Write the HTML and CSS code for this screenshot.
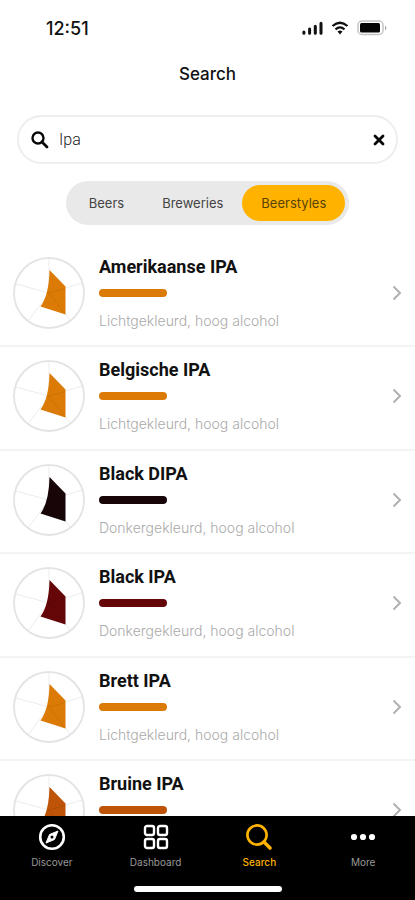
FILE: index.html
```html
<!DOCTYPE html>
<html lang="en">
<head>
<meta charset="utf-8">
<meta name="viewport" content="width=device-width, initial-scale=1">
<title>Search</title>
<link rel="stylesheet" href="styles.css">
</head>
<body>
<svg class="defs" aria-hidden="true">
  <symbol id="radar" viewBox="0 0 72 72">
    <path d="M36 36V1M36 36L69 26M36 36L58 64M36 36L15 64M36 36L3 27" fill="none" stroke="#ececec"/>
    <circle cx="36" cy="36" r="35" fill="none" stroke="#e4e4e4" stroke-width="1.8"/>
    <path d="M36.500 13L52.500 29.500V57.500L27.500 49.500Q36 38 36.500 13Z" fill="currentColor"/>
    <path d="M34 36.500L52 31.500M36 36L52 57" fill="none" stroke="#000" stroke-opacity=".07"/>
  </symbol>
  <symbol id="chevron" viewBox="0 0 10 16">
    <path d="M1.500 1.500L8 8L1.500 14.500" fill="none" stroke="#b0b0b0" stroke-width="2"/>
  </symbol>
</svg>

<div class="status">
  <span class="clock">12:51</span>
  <div class="signals">
    <svg width="21" height="14" viewBox="0 0 21 14" aria-hidden="true"><path d="M2 13V11.500M8 13V8.500M14 13V5.500M20 13V2.500" stroke="#111" stroke-width="3.200" stroke-linecap="round" fill="none" transform="scale(.95)"/></svg>
    <svg width="18" height="14" viewBox="0 0 18 14" aria-hidden="true"><path d="M1.500 5Q9-1.500 16.500 5M4.500 8.300Q9 4.500 13.500 8.300" stroke="#111" stroke-width="2.300" fill="none"/><path d="M6.500 10.500Q9 8.500 11.500 10.500L9 13.500Z" fill="#111"/></svg>
    <svg width="30" height="16" viewBox="0 0 30 16" aria-hidden="true"><rect x="1" y="1" width="25" height="13.500" rx="4" fill="#fff" stroke="#c4c4c4" stroke-width="1.500"/><rect x="3" y="3" width="20" height="9.500" rx="1.500" fill="#050505"/><path d="M28 5.500Q31 8 28 10.500Z" fill="#aaa"/></svg>
  </div>
</div>

<h1 class="title">Search</h1>

<form class="search" role="search">
  <label for="q" aria-label="Search"><svg width="18" height="18" viewBox="0 0 18 18"><circle cx="7" cy="7" r="5.500" fill="none" stroke="#080808" stroke-width="2.400"/><path d="M11 11L16 16" stroke="#080808" stroke-width="2.800" stroke-linecap="round"/></svg></label>
  <input id="q" type="text" value="Ipa">
  <button type="button" aria-label="Clear"><svg width="12" height="12" viewBox="0 0 12 12"><path d="M2 2L10 10M10 2L2 10" stroke="#080808" stroke-width="2.800" stroke-linecap="round"/></svg></button>
</form>

<div class="segments">
  <button type="button">Beers</button>
  <button type="button">Breweries</button>
  <button type="button" class="active">Beerstyles</button>
</div>

<main class="list">
  <a class="row amber" href="#"><svg class="radar"><use href="#radar"/></svg><div class="info"><h2>Amerikaanse IPA</h2><div class="bar"></div><p>Lichtgekleurd, hoog alcohol</p></div><svg class="chevron"><use href="#chevron"/></svg></a>
  <a class="row amber" href="#"><svg class="radar"><use href="#radar"/></svg><div class="info"><h2>Belgische IPA</h2><div class="bar"></div><p>Lichtgekleurd, hoog alcohol</p></div><svg class="chevron"><use href="#chevron"/></svg></a>
  <a class="row black" href="#"><svg class="radar"><use href="#radar"/></svg><div class="info"><h2>Black DIPA</h2><div class="bar"></div><p>Donkergekleurd, hoog alcohol</p></div><svg class="chevron"><use href="#chevron"/></svg></a>
  <a class="row red" href="#"><svg class="radar"><use href="#radar"/></svg><div class="info"><h2>Black IPA</h2><div class="bar"></div><p>Donkergekleurd, hoog alcohol</p></div><svg class="chevron"><use href="#chevron"/></svg></a>
  <a class="row amber" href="#"><svg class="radar"><use href="#radar"/></svg><div class="info"><h2>Brett IPA</h2><div class="bar"></div><p>Lichtgekleurd, hoog alcohol</p></div><svg class="chevron"><use href="#chevron"/></svg></a>
  <a class="row brown" href="#"><svg class="radar"><use href="#radar"/></svg><div class="info"><h2>Bruine IPA</h2><div class="bar"></div></div><svg class="chevron"><use href="#chevron"/></svg></a>
</main>

<nav class="tabs">
  <div class="tab-row">
    <a href="#"><svg viewBox="0 0 28 28"><circle cx="14" cy="14" r="11.800" fill="none" stroke="#fff" stroke-width="2.600"/><path d="M20 8L16.500 16.500L8 20L11.500 11.500Z" fill="#fff" stroke="#fff" stroke-linejoin="round"/><circle cx="14" cy="14" r="1.500" fill="#000"/></svg><span>Discover</span></a>
    <a href="#"><svg viewBox="0 0 28 28"><g fill="none" stroke="#fff" stroke-width="2.400"><rect x="3" y="3" width="9" height="9" rx="2"/><rect x="16" y="3" width="9" height="9" rx="2"/><rect x="3" y="16" width="9" height="9" rx="2"/><rect x="16" y="16" width="9" height="9" rx="2"/></g></svg><span>Dashboard</span></a>
    <a href="#" class="current"><svg viewBox="0 0 28 28"><circle cx="12" cy="12" r="9.600" fill="none" stroke="#ffb300" stroke-width="2.600"/><path d="M19 19L25 25" stroke="#ffb300" stroke-width="3.600" stroke-linecap="round"/></svg><span>Search</span></a>
    <a href="#"><svg viewBox="0 0 28 28"><g fill="#fff"><circle cx="5" cy="14" r="3.100"/><circle cx="14" cy="14" r="3.100"/><circle cx="23" cy="14" r="3.100"/></g></svg><span>More</span></a>
  </div>
  <div class="home"></div>
</nav>
</body>
</html>
```
FILE: styles.css
```css
* { box-sizing: border-box; }
body {
  margin: 0;
  height: 100vh;
  display: flex;
  flex-direction: column;
  background: #fff;
  font-family: Inter, sans-serif;
  color: #111;
  overflow: hidden;
}
h1, h2, p { margin: 0; }
a { text-decoration: none; color: inherit; }
button { border: 0; background: none; padding: 0; font: inherit; color: inherit; }
.defs { position: absolute; width: 0; height: 0; }

.status {
  flex: none;
  height: 56px;
  padding: 0 28px 0 46px;
  display: flex;
  align-items: center;
  justify-content: space-between;
}
.clock { font-size: 18px; font-weight: 500; }
.signals { display: flex; align-items: center; gap: 8px; }

.title {
  flex: none;
  height: 36px;
  line-height: 36px;
  text-align: center;
  font-size: 17px;
  font-weight: 500;
}

.search {
  flex: none;
  height: 49px;
  margin: 23px 17px 0;
  padding: 0 11px 0 12px;
  border: 2px solid #eee;
  border-radius: 25px;
  display: flex;
  align-items: center;
}
.search svg { display: block; }
.search input {
  flex: 1;
  min-width: 0;
  margin-left: 10px;
  padding: 0;
  border: 0;
  outline: 0;
  background: none;
  font: 300 16px Roboto, sans-serif;
  color: #222;
}

.segments {
  flex: none;
  align-self: center;
  height: 44px;
  margin-top: 17px;
  padding: 4px;
  border-radius: 22px;
  background: #e9e9e9;
  display: flex;
  font-size: 13px;
  color: #444;
}
.segments button { padding: 0 19px; border-radius: 18px; }
.segments .active { background: #ffb300; color: #5a4206; }

.list { flex: 1; min-height: 0; margin-top: 19px; overflow: hidden; }
.row {
  height: 103px;
  padding: 13px 13px 0;
  border-bottom: 2px solid #f4f4f4;
  display: flex;
  align-items: flex-start;
}
.row:nth-child(even) { height: 104px; }
.radar { width: 72px; height: 72px; flex: none; }
.info { flex: 1; margin-left: 14px; }
.info h2 { font: 700 18px/20px Roboto, sans-serif; color: #111; }
.bar { width: 68px; height: 8px; margin: 12px 0 15px; border-radius: 4px; background: currentColor; }
.info p { font-size: 14px; line-height: 18px; font-weight: 300; color: #aaa; }
.chevron { width: 10px; height: 16px; margin-top: 28px; flex: none; }
.amber { color: #db7b06; }
.black { color: #170508; }
.red { color: #650609; }
.brown { color: #bd5407; }

.tabs {
  flex: none;
  height: 84px;
  padding-top: 7px;
  background: #000;
  display: flex;
  flex-direction: column;
  align-items: center;
}
.tab-row { width: 100%; display: grid; grid-template-columns: repeat(4, 1fr); }
.tab-row a { display: flex; flex-direction: column; align-items: center; gap: 4px; font-size: 10px; line-height: 14px; color: #999; }
.tab-row svg { width: 28px; height: 28px; }
.tab-row .current { color: #ffb300; font-weight: 500; }
.home { width: 148px; height: 6px; margin-top: 17px; border-radius: 3px; background: #fff; }
```
